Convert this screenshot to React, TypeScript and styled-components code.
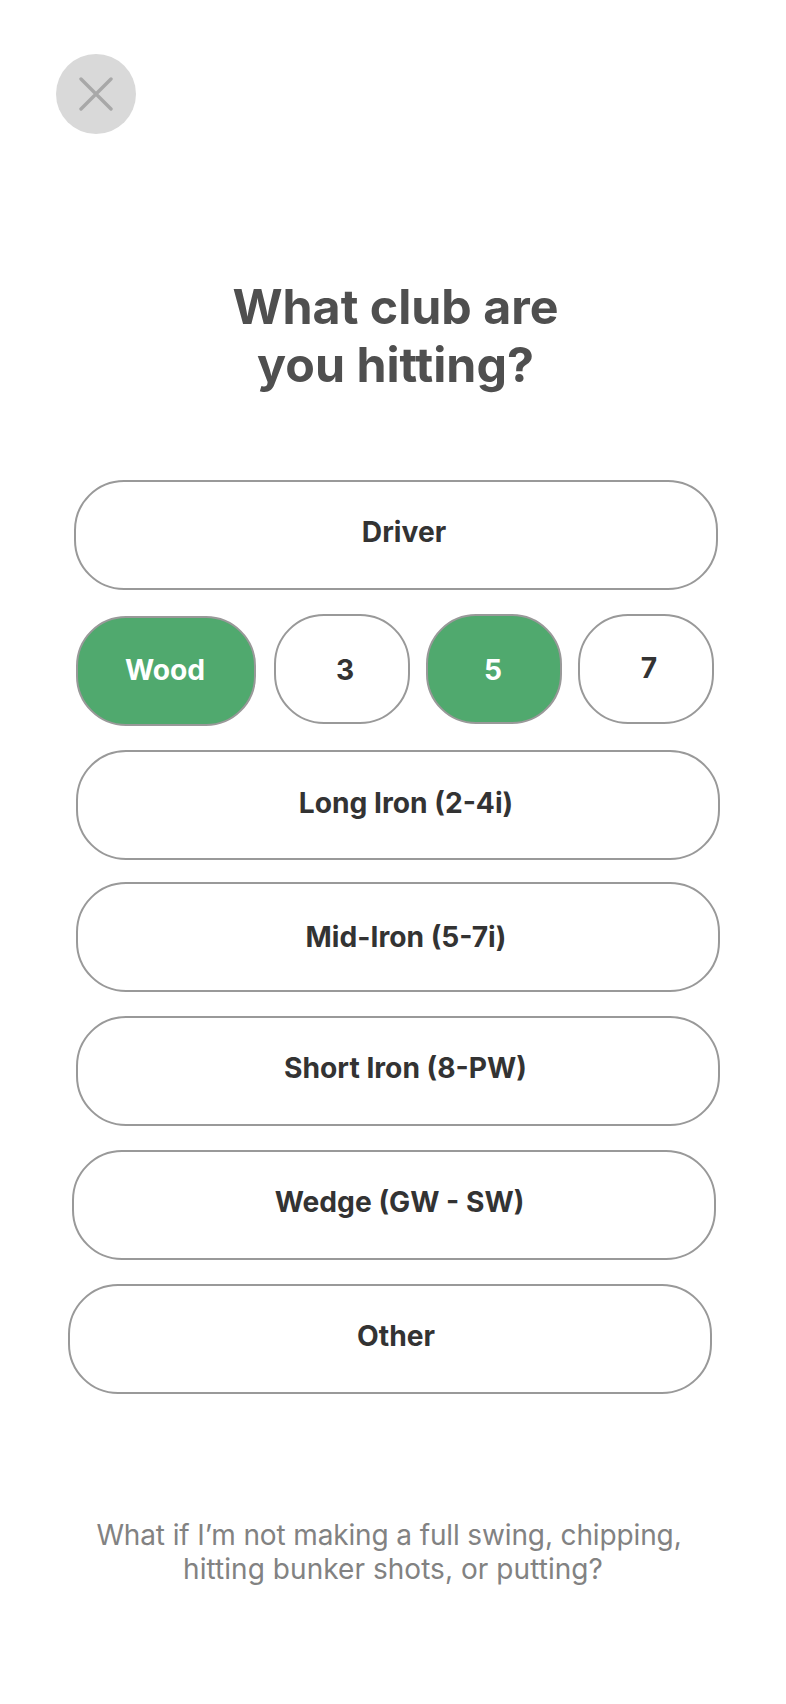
import styled, { createGlobalStyle } from "styled-components";

const GlobalStyle = createGlobalStyle`
  html, body {
    margin: 0;
    padding: 0;
    background: #ffffff;
  }
  * {
    box-sizing: border-box;
  }
`;

const Page = styled.div`
  width: 786px;
  height: 1704px;
  padding-top: 54px;
  display: flex;
  flex-direction: column;
  font-family: Inter, "Liberation Sans", sans-serif;
  overflow: hidden;
`;

const CloseButton = styled.button`
  width: 80px;
  height: 80px;
  margin-left: 56px;
  padding: 0;
  border: none;
  border-radius: 50%;
  background: #d9d9d9;
  display: flex;
  align-items: center;
  justify-content: center;
`;

const Title = styled.h1`
  margin: 144px 0 0;
  padding-left: 5px;
  font-size: 48.3px;
  line-height: 58px;
  font-weight: 700;
  color: #4f4f4f;
  text-align: center;
`;

const Options = styled.div`
  margin-top: 86px;
  display: flex;
  flex-direction: column;
`;

// 한 줄짜리 클럽 버튼, 줄마다 위치가 조금씩 어긋나 있음
const Option = styled.div<{ $left: number; $top: number; $nudge?: number; $lift?: number }>`
  width: 644px;
  height: 110px;
  margin-left: ${(p) => p.$left}px;
  margin-top: ${(p) => p.$top}px;
  padding-left: ${(p) => p.$nudge ?? 14}px;
  padding-bottom: ${(p) => p.$lift ?? 6}px;
  border: 2px solid #999999;
  border-radius: 50px;
  background: #ffffff;
  display: flex;
  align-items: center;
  justify-content: center;
  font-size: 28.2px;
  font-weight: 700;
  color: #333333;
`;

const WoodRow = styled.div`
  margin-top: 24px;
  margin-left: 76px;
  display: flex;
  align-items: flex-start;
  gap: 16px;
`;

const WoodChip = styled.div<{
  $width: number;
  $active?: boolean;
  $top?: number;
  $after?: number;
  $lift?: number;
  $nudge?: number;
}>`
  width: ${(p) => p.$width}px;
  height: 110px;
  margin-top: ${(p) => p.$top ?? 0}px;
  margin-right: ${(p) => p.$after ?? 0}px;
  padding-top: ${(p) => Math.max(-(p.$lift ?? 0), 0)}px;
  padding-bottom: ${(p) => Math.max(p.$lift ?? 0, 0)}px;
  padding-left: ${(p) => Math.max(p.$nudge ?? 0, 0)}px;
  padding-right: ${(p) => Math.max(-(p.$nudge ?? 0), 0)}px;
  border: 2px solid #999999;
  border-radius: 50px;
  background: ${(p) => (p.$active ? "#50a96e" : "#ffffff")};
  color: ${(p) => (p.$active ? "#ffffff" : "#333333")};
  display: flex;
  align-items: center;
  justify-content: center;
  font-size: 28.2px;
  font-weight: 700;
`;

const HelpText = styled.p`
  margin: 124px 0 0;
  font-size: 28px;
  line-height: 34px;
  font-weight: 400;
  letter-spacing: 0.05px;
  color: #828282;
  text-align: center;
`;

// 첫 줄은 자간이 약간 좁고 왼쪽으로 치우쳐 있음
const HelpLead = styled.span`
  display: block;
  padding-right: 8px;
  letter-spacing: -0.13px;
`;

export default function App() {
  return (
    <Page>
      <GlobalStyle />
      <CloseButton aria-label="Close">
        <svg width="34" height="34" viewBox="0 0 34 34" fill="none">
          <path
            d="M2 2 L32 32 M32 2 L2 32"
            stroke="#a8a8a8"
            strokeWidth="3.4"
            strokeLinecap="round"
          />
        </svg>
      </CloseButton>
      <Title>
        What club are
        <br />
        you hitting?
      </Title>
      <Options>
        <Option $left={74} $top={0} $nudge={16}>Driver</Option>
        <WoodRow>
          <WoodChip $width={180} $active $top={2} $after={2} $nudge={-2} $lift={2}>Wood</WoodChip>
          <WoodChip $width={136} $nudge={6} $lift={-2}>3</WoodChip>
          <WoodChip $width={136} $active $nudge={-2} $lift={-2}>5</WoodChip>
          <WoodChip $width={136} $nudge={6} $lift={2}>7</WoodChip>
        </WoodRow>
        <Option $left={76} $top={24} $lift={4} $nudge={16}>Long Iron (2-4i)</Option>
        <Option $left={76} $top={22} $lift={0} $nudge={16}>Mid-Iron (5-7i)</Option>
        <Option $left={76} $top={24} $nudge={15}>Short Iron (8-PW)</Option>
        <Option $left={72} $top={24} $nudge={11}>Wedge (GW - SW)</Option>
        <Option $left={68} $top={24} $nudge={12}>Other</Option>
      </Options>
      <HelpText>
        <HelpLead>What if I’m not making a full swing, chipping,</HelpLead>
        hitting bunker shots, or putting?
      </HelpText>
    </Page>
  );
}
